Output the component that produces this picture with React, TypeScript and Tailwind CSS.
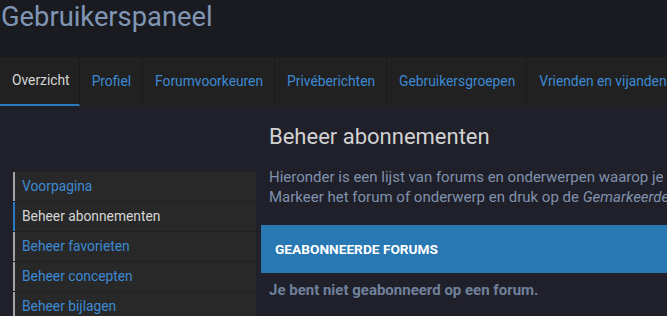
import React from 'react';

const tabs = ['Overzicht', 'Profiel', 'Forumvoorkeuren', 'Privéberichten', 'Gebruikersgroepen', 'Vrienden en vijanden'];

const sideItems = ['Voorpagina', 'Beheer abonnementen', 'Beheer favorieten', 'Beheer concepten', 'Beheer bijlagen'];

export default function App() {
  return (
    <div className="w-[667px] h-[316px] overflow-hidden bg-[#1f2029] font-['Roboto',sans-serif]">
      <div className="w-[1000px]">
        {/* Header */}
        <div className="h-[57px] bg-[#1a1b21] pl-[1px] pt-[1px]">
          <h1 className="text-[27.3px] leading-[32px] text-[#8096b4]">Gebruikerspaneel</h1>
        </div>

        {/* Tabs */}
        <div className="flex h-[49px] bg-[#212121]">
          {tabs.map((t, i) => (
            <div
              key={t}
              className={
                i === 0
                  ? 'flex items-center pl-3 pr-[9px] border-r border-[#1b1b1b] border-b-2 border-b-[#2b7bc0] text-[13.8px] text-[#d6d6d6]'
                  : 'flex items-center pl-3 pr-[11px] border-r border-[#1b1b1b] text-[13.8px] text-[#3d8ad4]'
              }
            >
              {t}
            </div>
          ))}
        </div>

        {/* Body */}
        <div className="flex">
          <div className="w-[243px] ml-[13px] mt-[66px] flex flex-col gap-[1px]">
            {sideItems.map((s, i) => (
              <div
                key={s}
                className={
                  i === 1
                    ? 'h-[29px] flex items-center pl-[7px] bg-[#282828] border-l-2 border-[#2b7bc0] text-[13.8px] text-[#d6d6d6]'
                    : 'h-[29px] flex items-center pl-[7px] bg-[#282828] border-l-2 border-[#a3a3a3] text-[13.8px] text-[#3d8ad4]'
                }
              >
                {s}
              </div>
            ))}
          </div>

          <div className="ml-[5px] flex-1">
            <h2 className="ml-[8px] mt-[17px] text-[22px] leading-[28px] text-[#d2d2d2]">Beheer abonnementen</h2>
            <p className="ml-[8px] mt-[16px] text-[15px] leading-[20px] text-[#8092ad] whitespace-nowrap">
              Hieronder is een lijst van forums en onderwerpen waarop je geabonneerd bent.
              <br />
              Markeer het forum of onderwerp en druk op de <em>Gemarkeerde verwijderen</em> knop om je af te melden.
            </p>
            <div className="mt-[18px] h-[48px] bg-[#2878b4] flex items-center pl-[14px] text-[13.7px] font-bold text-white">
              GEABONNEERDE FORUMS
            </div>
            <p className="ml-[8px] mt-[7px] text-[15px] leading-[20px] font-bold text-[#6f809c]">Je bent niet geabonneerd op een forum.</p>
          </div>
        </div>
      </div>
    </div>
  );
}
